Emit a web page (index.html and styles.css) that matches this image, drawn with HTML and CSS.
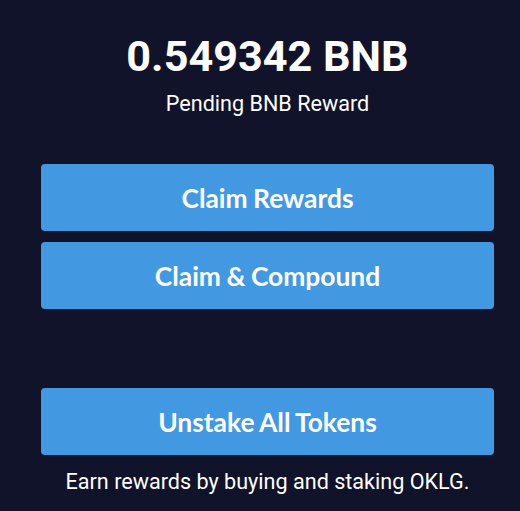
FILE: index.html
```html
<!DOCTYPE html>
<html>
<head>
<meta charset="utf-8">
<link rel="stylesheet" href="styles.css">
</head>
<body>
<main class="panel">
  <h1 class="amount">0.549342 BNB</h1>
  <p class="label">Pending BNB Reward</p>
  <div class="actions">
    <button class="btn">Claim Rewards</button>
    <button class="btn">Claim &amp; Compound</button>
  </div>
  <div class="actions unstake">
    <button class="btn">Unstake All Tokens</button>
  </div>
  <p class="note">Earn rewards by buying and staking OKLG.</p>
</main>
</body>
</html>
```
FILE: styles.css
```css
html, body {
  margin: 0;
  padding: 0;
  background: #11132a;
}
body {
  width: 520px;
  height: 511px;
  overflow: hidden;
  color: #ffffff;
  font-family: Roboto, "Liberation Sans", sans-serif;
}
.panel {
  display: flex;
  flex-direction: column;
  align-items: center;
  padding: 31px 26px 0 41px;
}
.amount {
  margin: 0;
  font-size: 43.2px;
  line-height: 52px;
  font-weight: 700;
}
.label {
  margin: 8px 0 0;
  font-size: 21.6px;
  line-height: 26px;
}
.actions {
  align-self: stretch;
  display: flex;
  flex-direction: column;
  gap: 11px;
  margin-top: 47px;
}
.unstake {
  margin-top: 79px;
}
.btn {
  height: 67px;
  border: 0;
  border-radius: 4px;
  background: #4299e1;
  color: #ffffff;
  font-family: Lato, "Liberation Sans", sans-serif;
  font-weight: 700;
  font-size: 26.4px;
  word-spacing: -1px;
  padding: 0;
}
.note {
  margin: 13px 0 0;
  font-size: 21.6px;
  line-height: 28px;
}
```
